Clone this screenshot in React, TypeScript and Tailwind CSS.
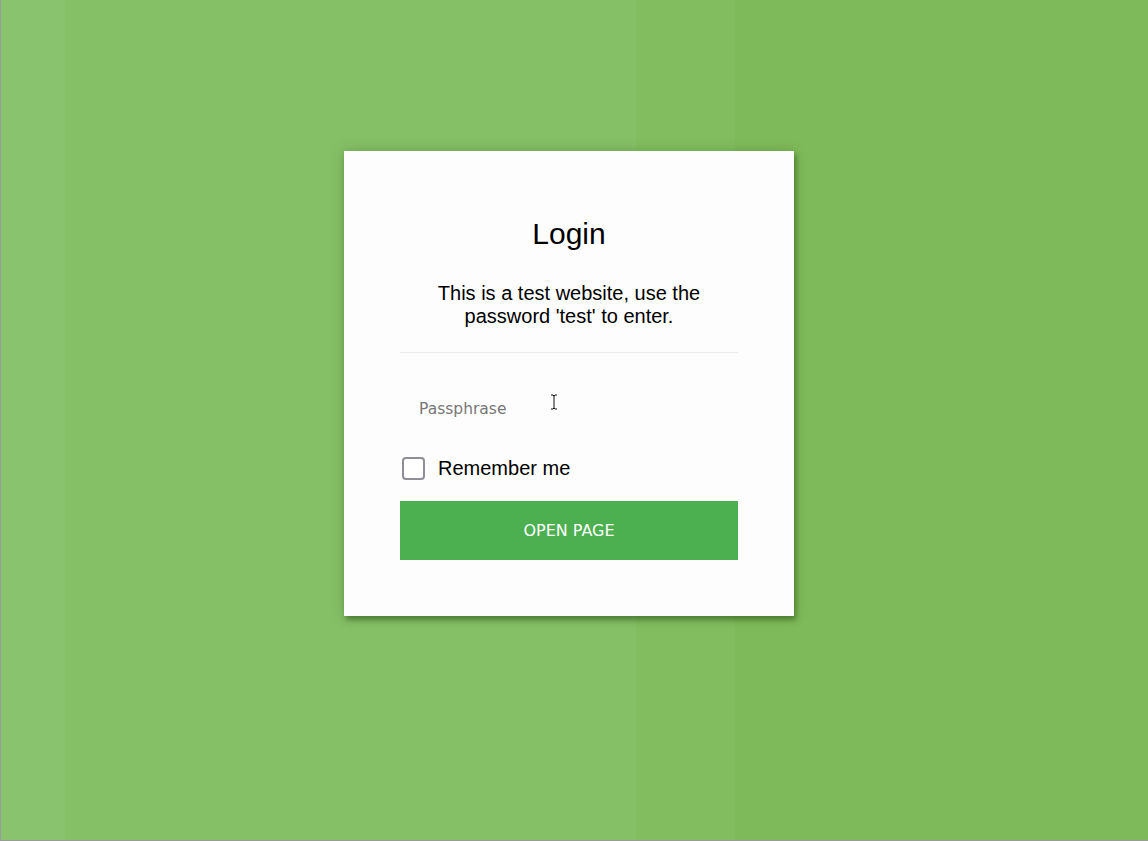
import React, { useState } from 'react';

export default function App() {
  const [remember, setRemember] = useState(false);
  const [pass, setPass] = useState('');

  return (
    <main className="flex h-[841px] w-full border-b border-l border-[#9a9a9a] bg-[linear-gradient(to_right,#8ac36d_0px,#8ac36d_64px,#85bf66_64px,#85bf66_635px,#82bd60_635px,#82bd60_734px,#7fba5a_734px)] pl-[343px] pt-[151px]">
      <div className="relative flex h-[465px] w-[450px] flex-col bg-[#fdfdfd] px-[56px] pb-[56px] shadow-[2px_4px_5px_rgba(40,80,20,0.5),0_0_12px_rgba(60,110,40,0.3)]">
        <h1 className="mt-[66px] text-center font-['Liberation_Sans',Arial,sans-serif] text-[30px] leading-[34px] text-black">
          Login
        </h1>
        <p className="mt-[31px] text-center font-['Liberation_Sans',Arial,sans-serif] text-[20px] leading-[23px] text-black">
          This is a test website, use the
          <br />
          password 'test' to enter.
        </p>
        <div className="mt-[24px] h-px w-full bg-[#ebebeb]" />
        <input
          type="password"
          value={pass}
          onChange={(e) => setPass(e.target.value)}
          placeholder="Passphrase"
          className="mt-[34px] h-[44px] w-full bg-transparent px-[19px] font-['DejaVu_Sans',Tahoma,sans-serif] text-[15.5px] text-black outline-none placeholder:text-[#777]"
        />
        <label className="mt-[25px] flex cursor-pointer items-center gap-[13px]">
          <input
            type="checkbox"
            checked={remember}
            onChange={(e) => setRemember(e.target.checked)}
            className="ml-[2px] h-[23px] w-[23px] cursor-pointer appearance-none rounded-[4px] border-[2.5px] border-[#8e8e96] bg-white checked:bg-[#4caf50]"
          />
          <span className="font-['Liberation_Sans',Arial,sans-serif] text-[20px] leading-[24px] text-black">Remember me</span>
        </label>
        <button className="mt-[21px] h-[59px] w-full bg-[#4caf50] font-['DejaVu_Sans',Tahoma,sans-serif] text-[16px] text-white">
          OPEN PAGE
        </button>
        {/* mouse cursor */}
        <svg className="pointer-events-none absolute left-[206px] top-[243px]" width="8" height="16" viewBox="0 0 8 16">
          <path d="M1 1h2l1 1 1-1h2M4 2v12M1 15h2l1-1 1 1h2" fill="none" stroke="#111" strokeWidth="1" />
        </svg>
      </div>
    </main>
  );
}
